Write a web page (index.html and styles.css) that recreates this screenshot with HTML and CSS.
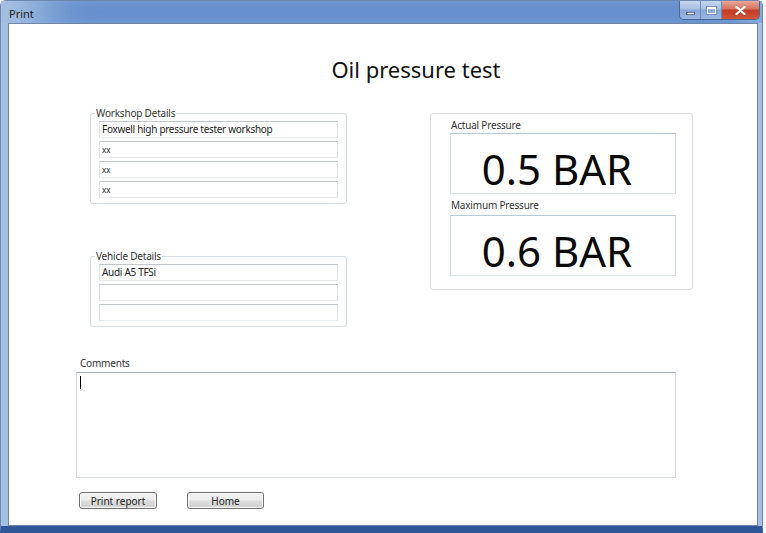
FILE: index.html
```html
<!DOCTYPE html>
<html lang="en">
<head>
  <meta charset="UTF-8" />
  <meta name="viewport" content="width=device-width, initial-scale=1.0" />
  <title>Print</title>
  <link rel="stylesheet" href="styles.css">
</head>
<body>
  <div class="window">
    <div class="titlebar">
      <span class="title">Print</span>
      <div class="controls">
        <span class="ctl min"><span class="bar"></span></span>
        <span class="ctl max"><span class="box"></span></span>
        <span class="ctl close">
          <svg width="11" height="9" viewBox="0 0 11 9"><path d="M1.5 1 L9.5 8 M9.5 1 L1.5 8" stroke="#fff" stroke-width="2.2" stroke-linecap="round"/></svg>
        </span>
      </div>
    </div>

    <div class="client">
      <h1>Oil pressure test</h1>

      <div class="panels">
        <div class="left-col">
          <fieldset class="group">
            <legend>Workshop Details</legend>
            <div class="field">Foxwell high pressure tester workshop</div>
            <div class="field small">xx</div>
            <div class="field small">xx</div>
            <div class="field small">xx</div>
          </fieldset>

          <fieldset class="group vehicle">
            <legend>Vehicle Details</legend>
            <div class="field">Audi A5 TFSi</div>
            <div class="field"></div>
            <div class="field"></div>
          </fieldset>
        </div>

        <div class="pressure">
          <div class="plabel">Actual Pressure</div>
          <div class="pvalue">0.5 BAR</div>
          <div class="plabel second">Maximum Pressure</div>
          <div class="pvalue">0.6 BAR</div>
        </div>
      </div>

      <div class="comments">
        <div class="clabel">Comments</div>
        <div class="textarea"><span class="caret"></span></div>
      </div>

      <div class="actions">
        <button class="btn print">Print report</button>
        <button class="btn home">Home</button>
      </div>
    </div>
  </div>
</body>
</html>
```

FILE: styles.css
```css
* {
  box-sizing: border-box;
}

body {
  margin: 0;
  width: 766px;
  height: 533px;
  overflow: hidden;
  background-color: #f4f6f9;
  font-family: "Noto Sans", "Open Sans", sans-serif;
  color: #1a1a1a;
}

.window {
  width: 763px;
  height: 533px;
  display: flex;
  flex-direction: column;
  border-radius: 6px 6px 0 0;
  border: 1px solid #6e89b0;
  border-bottom: 7px solid #2f5696;
  background-color: #a5bfe2;
}

.titlebar {
  height: 22px;
  display: flex;
  justify-content: space-between;
  align-items: flex-start;
  padding-left: 8px;
  background-color: #5482c6;
  box-shadow: inset 60px 0 50px -20px #a7c1e3, inset -30px 0 30px -15px #86a8da;
}

.title {
  font-size: 11px;
  line-height: 14px;
  margin-top: 6px;
  color: #1c1c1c;
}

.controls {
  display: flex;
  margin-right: 2px;
  border: 1px solid #4a6890;
  border-top: none;
  border-radius: 0 0 5px 5px;
  overflow: hidden;
}

.ctl {
  height: 18px;
  display: flex;
  align-items: center;
  justify-content: center;
}

.min, .max {
  width: 21px;
  background: linear-gradient(to bottom, #c4d6ee 0%, #a7c0e3 45%, #86a6d6 50%, #9ab8e2 100%);
  border-right: 1px solid #6f8db8;
}

.min .bar {
  width: 9px;
  height: 3px;
  margin-top: 6px;
  background-color: #fff;
  border: 1px solid #5a6f8f;
}

.max .box {
  width: 9px;
  height: 7px;
  border: 1px solid #fff;
  border-top-width: 2px;
  box-shadow: 0 0 0 1px #7890b2;
}

.close {
  width: 37px;
  background: linear-gradient(to bottom, #e8a89a 0%, #d7705c 45%, #c23a22 50%, #d0553a 100%);
}

.client {
  flex: 1;
  margin: 0 4px 0 7px;
  background-color: #fff;
  border: 1px solid #6d86aa;
  display: flex;
  flex-direction: column;
}

h1 {
  margin: 30px 0 0;
  padding-left: 66px;
  text-align: center;
  font-size: 22px;
  line-height: 30px;
  font-weight: normal;
  color: #111;
}

.panels {
  display: flex;
  align-items: flex-start;
  gap: 83px;
  margin-top: 23px;
  padding-left: 81px;
}

.left-col {
  width: 257px;
  display: flex;
  flex-direction: column;
}

.group {
  margin: 0;
  min-width: 0;
  padding: 2px 8px 5px;
  border: 1px solid #d6dde3;
  border-radius: 3px;
}

.group legend {
  font-size: 10px;
  line-height: 12px;
  padding: 0 1px;
  margin-left: -4px;
  letter-spacing: -0.2px;
  color: #333;
}

.vehicle {
  margin-top: 46px;
}

.field {
  height: 17px;
  margin-top: 3px;
  padding-left: 2px;
  border: 1px solid;
  border-color: #c2c7cd #dfe3e8 #e6e9ed #dfe3e8;
  font-size: 10px;
  line-height: 15px;
  letter-spacing: -0.3px;
  color: #222;
  white-space: nowrap;
}

.field:first-of-type {
  margin-top: 0;
}

.field.small {
  font-size: 8px;
  letter-spacing: 0;
}

.pressure {
  width: 263px;
  margin-top: 6px;
  padding: 5px 16px 13px 19px;
  border: 1px solid #dcdfe3;
  border-radius: 3px;
}

.plabel {
  font-size: 10px;
  line-height: 12px;
  padding-left: 1px;
  letter-spacing: -0.2px;
  color: #333;
}

.plabel.second {
  margin-top: 5px;
}

.pvalue {
  height: 61px;
  margin-top: 2px;
  padding: 12px 12px 0 0;
  border: 1px solid;
  border-color: #b7c9d2 #d3dee3 #dfe6ea #d3dee3;
  text-align: center;
  font-size: 42px;
  line-height: 46px;
  color: #0a0a0a;
}

.pvalue + .plabel + .pvalue {
  margin-top: 4px;
}

.comments {
  margin-top: 30px;
}

.clabel {
  margin-left: 71px;
  font-size: 10px;
  line-height: 12px;
  letter-spacing: -0.2px;
  color: #333;
}

.textarea {
  width: 600px;
  height: 106px;
  margin: 3px 0 0 67px;
  padding: 3px 0 0 3px;
  border: 1px solid;
  border-color: #9fb0bb #d5dde2 #dce2e6 #d5dde2;
}

.caret {
  display: block;
  width: 1px;
  height: 13px;
  background-color: #000;
}

.actions {
  display: flex;
  gap: 30px;
  margin: 14px 0 0 70px;
}

.btn {
  height: 17px;
  padding: 0;
  border: 1px solid #707070;
  border-radius: 3px;
  background: linear-gradient(to bottom, #f3f3f3 0%, #ebebeb 48%, #dddddd 52%, #d0d0d0 100%);
  box-shadow: inset 0 0 0 1px #fbfbfb;
  font-family: "Noto Sans", "Open Sans", sans-serif;
  font-size: 10px;
  line-height: 14px;
  color: #222;
}

.btn.print {
  width: 78px;
}

.btn.home {
  width: 77px;
}
```
